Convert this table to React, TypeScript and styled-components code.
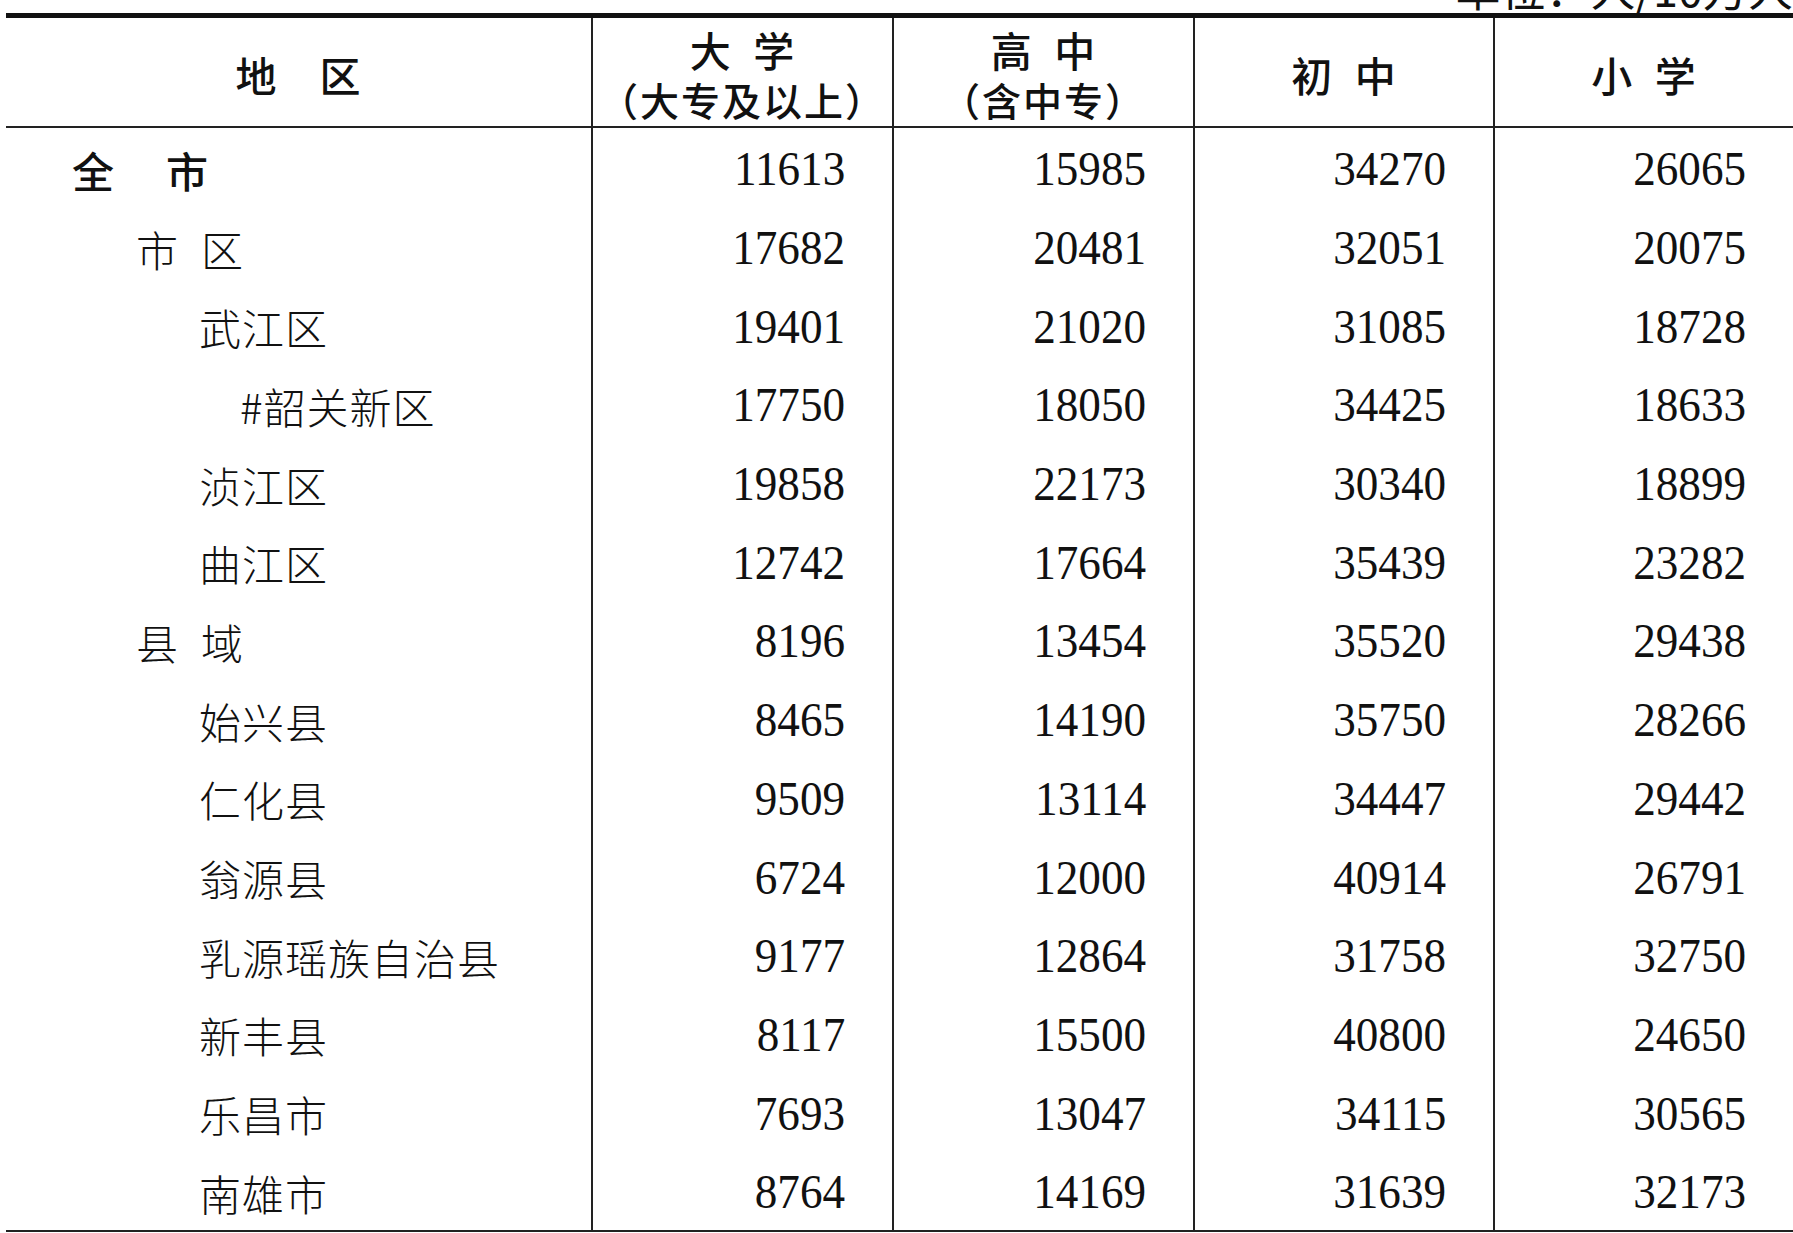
import React from "react";
import styled, { createGlobalStyle } from "styled-components";

interface Row {
  name: string;
  level: number;
  values: number[];
}

const Rows: Row[] = [
  { name: "全\u3000市", level: 0, values: [11613, 15985, 34270, 26065] },
  { name: "市\u2002区", level: 1, values: [17682, 20481, 32051, 20075] },
  { name: "武江区", level: 2, values: [19401, 21020, 31085, 18728] },
  { name: "#韶关新区", level: 3, values: [17750, 18050, 34425, 18633] },
  { name: "浈江区", level: 2, values: [19858, 22173, 30340, 18899] },
  { name: "曲江区", level: 2, values: [12742, 17664, 35439, 23282] },
  { name: "县\u2002域", level: 1, values: [8196, 13454, 35520, 29438] },
  { name: "始兴县", level: 2, values: [8465, 14190, 35750, 28266] },
  { name: "仁化县", level: 2, values: [9509, 13114, 34447, 29442] },
  { name: "翁源县", level: 2, values: [6724, 12000, 40914, 26791] },
  { name: "乳源瑶族自治县", level: 2, values: [9177, 12864, 31758, 32750] },
  { name: "新丰县", level: 2, values: [8117, 15500, 40800, 24650] },
  { name: "乐昌市", level: 2, values: [7693, 13047, 34115, 30565] },
  { name: "南雄市", level: 2, values: [8764, 14169, 31639, 32173] },
];

const Headers = [
  ["地\u3000区"],
  ["大\u2002学", "（大专及以上）"],
  ["高\u2002中", "（含中专）"],
  ["初\u2002中"],
  ["小\u2002学"],
];

const indent = [66, 130, 193, 234];

const GlobalStyle = createGlobalStyle`
  html, body {
    margin: 0;
    padding: 0;
    background: #ffffff;
    overflow: hidden;
  }
  body {
    font-family: "Noto Sans CJK SC", sans-serif;
    color: #111;
  }
`;

const Page = styled.div`
  width: 1793px;
  padding-left: 6px;
  box-sizing: border-box;
`;

const Caption = styled.div`
  height: 13px;
  overflow: hidden;
  display: flex;
  justify-content: flex-end;
  align-items: flex-end;
`;

const CaptionText = styled.span`
  font-family: "Noto Sans CJK SC", sans-serif;
  font-size: 45px;
  line-height: 45px;
  margin-bottom: 3px;
  white-space: nowrap;
`;

const Table = styled.div`
  display: grid;
  grid-template-columns: 585px 301px 301px 300px 1fr;
  border-top: 5px solid #111;
  border-bottom: 2px solid #222;
`;

const HeaderCell = styled.div<{ $first: boolean }>`
  height: 110px;
  display: flex;
  flex-direction: column;
  align-items: center;
  justify-content: center;
  border-left: ${({ $first }) => ($first ? "none" : "2px solid #222")};
  border-bottom: 2px solid #222;
  font-family: "Noto Sans CJK SC", sans-serif;
  font-weight: 500;
  font-size: 41px;
  white-space: pre;
  padding-top: 4px;
  box-sizing: border-box;
`;

const HeaderLine = styled.div<{ $sub: boolean }>`
  height: 50px;
  line-height: 50px;
  letter-spacing: ${({ $sub }) => ($sub ? "2px" : "1px")};
  font-size: ${({ $sub }) => ($sub ? "39px" : "41px")};
`;

const NameCell = styled.div<{ $level: number }>`
  height: 78.7px;
  display: flex;
  align-items: center;
  padding-left: ${({ $level }) => indent[$level]}px;
  padding-top: 4px;
  box-sizing: border-box;
  font-family: "Noto Sans CJK SC", sans-serif;
  font-weight: ${({ $level }) => ($level === 0 ? 500 : 300)};
  font-size: 42px;
  letter-spacing: ${({ $level }) => ($level === 0 ? "5px" : "1px")};
  white-space: pre;
`;

const NumCell = styled.div`
  height: 78.7px;
  display: flex;
  align-items: center;
  justify-content: flex-end;
  padding-right: 47px;
  padding-top: 4px;
  box-sizing: border-box;
  border-left: 2px solid #222;
`;

const Num = styled.span`
  display: inline-block;
  font-family: "Liberation Serif", "Times New Roman", serif;
  font-size: 48px;
  line-height: 1;
  transform: scaleX(0.94);
  transform-origin: right center;
`;

const App: React.FC = () => {
  return (
    <Page>
      <GlobalStyle />
      <Caption>
        <CaptionText>单位：人/10万人</CaptionText>
      </Caption>
      <Table>
        {Headers.map((lines, i) => (
          <HeaderCell key={i} $first={i === 0}>
            {lines.map((l, k) => (
              <HeaderLine key={l} $sub={k > 0}>
                {l}
              </HeaderLine>
            ))}
          </HeaderCell>
        ))}
        {Rows.map((row) => (
          <React.Fragment key={row.name}>
            <NameCell $level={row.level}>{row.name}</NameCell>
            {row.values.map((v, j) => (
              <NumCell key={j}>
                <Num>{v}</Num>
              </NumCell>
            ))}
          </React.Fragment>
        ))}
      </Table>
    </Page>
  );
};

export default App;
